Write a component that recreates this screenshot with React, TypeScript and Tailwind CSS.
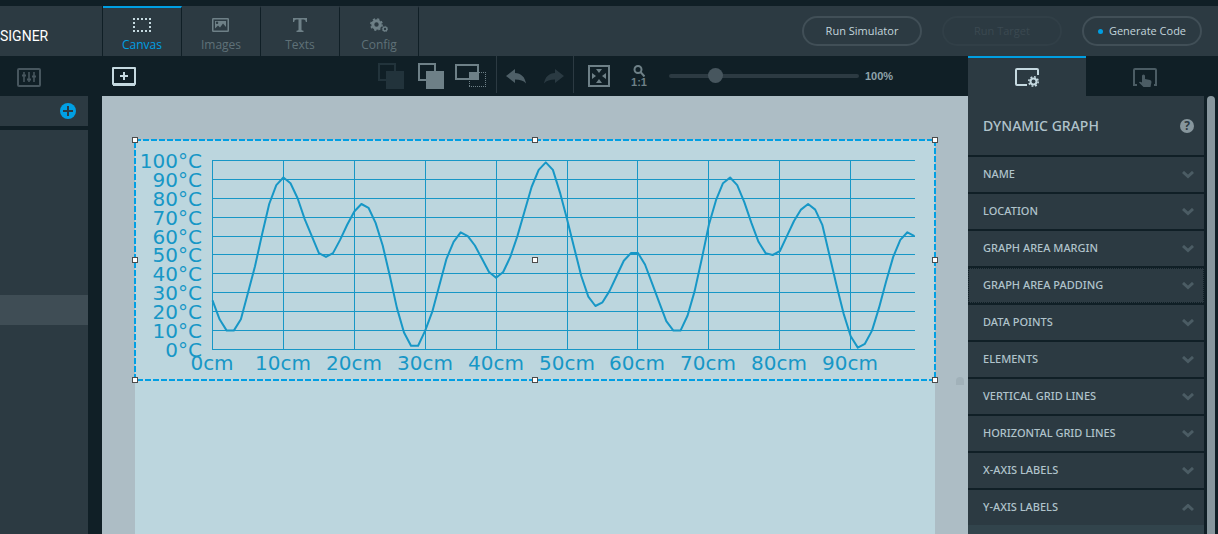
import { useState, type ReactNode } from "react";
import clsx from "clsx";

const NAV_ITEMS = ["Canvas", "Images", "Texts", "Config"] as const;
type NavItem = (typeof NAV_ITEMS)[number];

const SECTIONS = [
  "NAME",
  "LOCATION",
  "GRAPH AREA MARGIN",
  "GRAPH AREA PADDING",
  "DATA POINTS",
  "ELEMENTS",
  "VERTICAL GRID LINES",
  "HORIZONTAL GRID LINES",
  "X-AXIS LABELS",
  "Y-AXIS LABELS",
];

// One reading per centimetre, in °C.
const READINGS = [
  26, 16, 10, 10, 16, 30, 44, 61, 77, 87, 91, 88, 80, 69, 60, 51, 49, 51, 58, 66,
  73, 77, 75, 67, 55, 39, 22, 9, 2, 2, 10, 20, 34, 48, 57, 62, 60, 55, 48, 41,
  38, 41, 49, 60, 73, 86, 95, 99, 95, 83, 69, 54, 39, 28, 23, 25, 31, 39, 47, 51,
  51, 45, 35, 25, 15, 10, 10, 18, 31, 48, 66, 79, 88, 91, 87, 78, 67, 57, 51, 50,
  52, 60, 68, 74, 77, 74, 66, 50, 34, 19, 7, 1, 3, 10, 22, 36, 49, 58, 62, 60,
];

const PLOT = { left: 77, right: 779, top: 20, bottom: 209 };
const STEPS = [0, 10, 20, 30, 40, 50, 60, 70, 80, 90, 100];
const xOf = (i: number) => PLOT.left + (i * (PLOT.right - PLOT.left)) / 99;
const yOf = (v: number) => PLOT.bottom - (v * (PLOT.bottom - PLOT.top)) / 100;
// Halves go down, so the grid stays on whole pixels.
const snap = (n: number) => Math.ceil(n - 0.5);

function NavIcon({ name }: { name: NavItem }) {
  if (name === "Canvas") {
    return (
      <svg width="18" height="14" viewBox="0 0 18 14" fill="none" stroke="currentColor" strokeWidth="2">
        <path d="M0 1h18M0 13h18" strokeDasharray="2 2" />
        <path d="M1 4v8M17 4v8" strokeDasharray="2 2" />
      </svg>
    );
  }
  if (name === "Images") {
    return (
      <svg width="18" height="14" viewBox="0 0 18 14">
        <rect x="0.75" y="0.75" width="15.5" height="12.5" rx="0.5" fill="none" stroke="currentColor" strokeWidth="1.5" />
        <path fill="currentColor" fillRule="evenodd" d="M3 3h11v6l-3-3.500-3 4-2-2-3 3zM5 3.600a1.200 1.200 0 1 0 .1 0z" />
      </svg>
    );
  }
  if (name === "Texts") {
    return (
      <svg width="14" height="14" viewBox="0 0 14 14" fill="currentColor">
        <path d="M0 0h14v4h-1.2C12.5 2.2 12 1.5 10.500 1.500H8.500v10c0 .8.5 1 2 1.200V14h-7v-1.300c1.500-.2 2-.4 2-1.200v-10h-2C2 1.500 1.500 2.200 1.200 4H0z" />
      </svg>
    );
  }
  return (
    <svg width="18" height="14" viewBox="0 0 18 14" fill="none" stroke="currentColor">
      <circle cx="6.500" cy="6.500" r="3.700" strokeWidth="3" />
      <circle cx="6.500" cy="6.500" r="5.600" strokeWidth="1.600" strokeDasharray="2.200 2.200" />
      <circle cx="15" cy="11" r="1.900" strokeWidth="1.400" />
      <circle cx="15" cy="11" r="2.700" strokeWidth="0.800" strokeDasharray="1.060 1.060" />
    </svg>
  );
}

function IconButton({ label, className, children }: { label: string; className?: string; children: ReactNode }) {
  return (
    <button type="button" aria-label={label} className={clsx("flex shrink-0 items-center justify-center", className)}>
      {children}
    </button>
  );
}

function LayersIcon() {
  return (
    <svg width="26" height="26" viewBox="0 0 26 26">
      <rect x="1" y="1" width="16" height="16" fill="none" stroke="currentColor" strokeWidth="2" />
      <rect x="8" y="8" width="18" height="18" fill="currentColor" />
    </svg>
  );
}

function ReplyArrow({ flip }: { flip?: boolean }) {
  return (
    <svg width="20" height="15" viewBox="0 0 20 15" fill="currentColor" className={flip ? "-scale-x-100" : undefined}>
      <path d="M0 7 9 0v4c6 .2 10 4 11 10.500C17.500 11.500 14 10.500 9 10.500V14z" />
    </svg>
  );
}

function Toolbar() {
  return (
    <div className="flex h-10 items-center pl-[10px] pr-[76px]">
      <IconButton label="Add widget" className="text-[#c5d9e0]">
        <svg width="24" height="19" viewBox="0 0 24 19" fill="none" stroke="currentColor">
          <path d="M1 1h22v16H1z" strokeWidth="2" strokeLinejoin="round" />
          <path d="M1 17.500h22" strokeWidth="3" />
          <path d="M12 5v8M8 9h8" strokeWidth="2" />
        </svg>
      </IconButton>

      <div className="ml-auto flex h-full items-center text-[#6e8087]">
        <IconButton label="Bring to front" className="text-[#22333b]">
          <LayersIcon />
        </IconButton>
        <IconButton label="Send to back" className="ml-[14px]">
          <LayersIcon />
        </IconButton>
        <IconButton label="Crop to container" className="ml-[11px]">
          <svg width="31" height="24" viewBox="0 0 31 24" fill="none" stroke="currentColor">
            <rect x="1" y="1" width="22" height="14" strokeWidth="2" />
            <rect x="14" y="8" width="10" height="8" fill="currentColor" stroke="none" />
            <path d="M24 8.500h7M30.500 10v13M14 22.500h16M14.500 17v5" strokeDasharray="1 1" />
          </svg>
        </IconButton>
        <span className="ml-[10px] h-[37px] w-px self-start bg-[#2c3a42]" />
        <IconButton label="Undo" className="ml-[9px] text-[#4f6068]">
          <ReplyArrow />
        </IconButton>
        <IconButton label="Redo" className="ml-[18px] text-[#2a3a42]">
          <ReplyArrow flip />
        </IconButton>
        <span className="ml-[9px] h-[37px] w-px self-start bg-[#2c3a42]" />
        <IconButton label="Fit to window" className="ml-[14px]">
          <svg width="22" height="22" viewBox="0 0 22 22">
            <rect x="1" y="1" width="20" height="20" fill="none" stroke="currentColor" strokeWidth="2" />
            <path d="M8 4h6l-3 4zM8 18h6l-3-4zM4 8v6l4-3zM18 8v6l-4-3z" fill="currentColor" />
          </svg>
        </IconButton>
        <IconButton label="Zoom to actual size" className="ml-[22px] w-[14px] flex-col">
          <svg width="12" height="12" viewBox="0 0 12 12" fill="none" stroke="currentColor" strokeWidth="2">
            <circle cx="5" cy="4.500" r="3.500" />
            <path d="m7.500 7 4 4.500" />
          </svg>
          <span className="font-['Liberation_Sans'] text-[11px] font-bold leading-[11px]">1:1</span>
        </IconButton>
        <input
          type="range"
          aria-label="Zoom"
          min={0}
          max={100}
          defaultValue={22}
          className="ml-[23px] h-[15px] w-[190px] appearance-none bg-transparent [&::-webkit-slider-runnable-track]:h-1 [&::-webkit-slider-runnable-track]:rounded-full [&::-webkit-slider-runnable-track]:bg-[#2c3a42] [&::-webkit-slider-thumb]:-mt-[6px] [&::-webkit-slider-thumb]:size-[15px] [&::-webkit-slider-thumb]:appearance-none [&::-webkit-slider-thumb]:rounded-full [&::-webkit-slider-thumb]:bg-[#47565e]"
        />
        <span className="ml-[6px] w-[27px] whitespace-nowrap font-['Liberation_Sans'] text-[11px] font-bold text-[#8fa3ab]">
          100%
        </span>
      </div>
    </div>
  );
}

function DynamicGraph() {
  const points = READINGS.map((v, i) => `${xOf(i).toFixed(1)},${yOf(v).toFixed(1)}`).join(" ");
  return (
    <svg viewBox="0 0 800 240" className="block w-full overflow-visible" role="img" aria-label="Dynamic graph">
      <g stroke="#1797c6" fill="none">
        {STEPS.map((v) => (
          <path key={v} d={`M${PLOT.left} ${snap(yOf(v)) + 0.5}H${PLOT.right + 1}`} />
        ))}
        {STEPS.slice(0, 10).map((v) => (
          <path key={v} d={`M${snap(xOf(v)) + 0.5} ${PLOT.top}V${PLOT.bottom + 1}`} />
        ))}
        <polyline points={points} strokeWidth="2" strokeLinejoin="round" transform="translate(0.5 0.5)" />
      </g>
      <g fill="#1797c6" fontSize="20" className="font-['DejaVu_Sans']">
        {STEPS.map((v) => (
          <text key={v} x="67" y={snap(yOf(v)) + 8} textAnchor="end">
            {v}°C
          </text>
        ))}
        {STEPS.slice(0, 10).map((v) => (
          <text key={v} x={snap(xOf(v))} y="230" textAnchor="middle">
            {v}cm
          </text>
        ))}
      </g>
      {/* selection frame and its handles */}
      <rect width="800" height="240" fill="none" stroke="#009fe3" strokeWidth="2" strokeDasharray="6 2" />
      {[
        [0, 0], [400, 0], [800, 0],
        [0, 120], [400, 120], [800, 120],
        [0, 240], [400, 240], [800, 240],
      ].map(([x, y]) => (
        <rect key={`${x}-${y}`} x={x - 2.5} y={y - 2.5} width="5" height="5" fill="#fff" stroke="#4c4c4c" />
      ))}
    </svg>
  );
}

function Chevron({ up }: { up?: boolean }) {
  return (
    <svg width="12" height="8" viewBox="0 0 12 8" fill="none" stroke="#4b5c64" strokeWidth="3">
      <path d={up ? "m1 6 5-4.500 5 4.500" : "m1 1 5 4.500 5-4.500"} />
    </svg>
  );
}

function PropertiesPanel() {
  const [open, setOpen] = useState("Y-AXIS LABELS");
  const focused = "GRAPH AREA PADDING";
  return (
    <aside className="flex w-[250px] shrink-0 flex-col font-['Noto_Sans','Open_Sans',sans-serif]">
      <div className="flex h-10 shrink-0 pr-[14px]">
        <button
          type="button"
          aria-label="Properties"
          className="flex flex-1 items-center justify-center border-t-2 border-[#009fe3] bg-[#2c3a42] text-[#c5d9e0]"
        >
          <svg width="24" height="19" viewBox="0 0 24 19" fill="none" stroke="currentColor">
            <path d="M12 17H2a1 1 0 0 1-1-1V2a1 1 0 0 1 1-1h20q1 0 1 1v5" strokeWidth="2" />
            <circle cx="18.500" cy="13.500" r="3" strokeWidth="2" />
            <circle cx="18.500" cy="13.500" r="4.700" strokeWidth="1.600" strokeDasharray="1.850 1.841" />
          </svg>
        </button>
        <button type="button" aria-label="Interactions" className="flex flex-1 items-center justify-center pt-[2px] text-[#4b5c64]">
          <svg width="24" height="19" viewBox="0 0 24 19">
            <path d="M4 17H1V2q0-1 1-1h20q1 0 1 1v15h-2" fill="none" stroke="currentColor" strokeWidth="2" />
            <path
              d="M9 8a1.500 1.500 0 0 1 3 0v3l5 1q1.500.4 1.500 2L17.500 19h-7L6 14.500q.5-1.600 3 0z"
              fill="currentColor"
            />
          </svg>
        </button>
      </div>
      <div className="flex min-h-0 flex-1">
        <div className="flex min-w-0 flex-1 flex-col gap-[2px]">
          <div className="flex h-[59px] shrink-0 items-center justify-between bg-[#2c3a42] pl-[15px] pr-[10px]">
            <h2 className="text-[14px] font-medium text-[#b0c3cb]">DYNAMIC GRAPH</h2>
            <button
              type="button"
              aria-label="Help"
              className="flex size-[14px] items-center justify-center rounded-full bg-[#87969d] text-[12px] font-bold text-[#2c3a42]"
            >
              ?
            </button>
          </div>
          {SECTIONS.map((name) => (
            <button
              key={name}
              type="button"
              aria-expanded={open === name}
              onClick={() => setOpen(open === name ? "" : name)}
              className={clsx(
                "flex h-[35px] shrink-0 items-center justify-between bg-[#2c3a42] pl-[15px] pr-[10px] text-[11px] font-medium text-[#b0c3cb]",
                name === focused && "outline-1 -outline-offset-1 outline-dotted outline-[#101f26]",
              )}
            >
              {name}
              <Chevron up={open === name} />
            </button>
          ))}
          {open && <div className="-mt-[2px] h-[200px] shrink-0 bg-[#32444c]" />}
        </div>
        <div className="w-[14px] shrink-0 px-[3px]">
          <div className="h-full w-2 rounded-t-full bg-[#87969d]" />
        </div>
      </div>
    </aside>
  );
}

function ScreensPanel() {
  return (
    <aside className="flex w-[102px] shrink-0 flex-col pr-[14px]">
      <div className="flex h-10 shrink-0 items-center pl-[17px] pt-[3px] text-[#47565e]">
        <svg width="24" height="19" viewBox="0 0 24 19" fill="none" stroke="currentColor" strokeWidth="2">
          <rect x="1" y="1" width="22" height="17" rx="1" />
          <path d="M7 4v10M12 4v10M17 4v10" strokeWidth="1.600" />
          <path d="M5 7.500h4M10 11.500h4M15 8.500h4" />
        </svg>
      </div>
      <div className="flex h-[30px] shrink-0 items-center justify-end bg-[#2c3a42] pr-3">
        <IconButton label="Add screen" className="size-4 rounded-full bg-[#009fe3] text-[#2c3a42]">
          <svg width="10" height="10" viewBox="0 0 10 10" stroke="currentColor" strokeWidth="2">
            <path d="M5 0v10M0 5h10" />
          </svg>
        </IconButton>
      </div>
      <div className="mt-1 min-h-0 flex-1 bg-[#2c3a42] pt-[165px]">
        <div className="h-[30px] bg-[#3f4d55]" />
      </div>
    </aside>
  );
}

export default function App() {
  const [active, setActive] = useState<NavItem>("Canvas");
  return (
    <div className="flex h-screen flex-col overflow-hidden bg-[#101f26] pt-[6px] font-['Open_Sans',sans-serif]">
      <header className="flex h-[50px] shrink-0 items-stretch bg-[#2c3a42]">
        <div className="flex w-[102px] shrink-0 items-center pt-[10px] font-['Roboto'] text-[14px] text-white">SIGNER</div>
        <nav className="flex border-l border-[#101f26]">
          {NAV_ITEMS.map((item) => (
            <button
              key={item}
              type="button"
              onClick={() => setActive(item)}
              className={clsx(
                "flex w-[79px] flex-col items-center border-r border-t-2 border-r-[#101f26] pt-[10px]",
                item === active ? "border-t-[#009fe3]" : "border-t-transparent",
              )}
            >
              <span className={item === active ? "text-[#c5d9e0]" : "text-[#6e8087]"}>
                <NavIcon name={item} />
              </span>
              <span
                className={clsx("mt-1 text-[12px] leading-[18px]", item === active ? "text-[#009fe3]" : "text-[#5f7178]")}
              >
                {item}
              </span>
            </button>
          ))}
        </nav>
        <div className="ml-auto flex items-center gap-5 pr-4 text-[11px] text-[#c3d5dc]">
          <button type="button" className="h-[30px] w-[120px] rounded-full border-2 border-[#414f57]">
            Run Simulator
          </button>
          <button type="button" disabled className="h-[30px] w-[120px] rounded-full border-2 border-[#313f47] text-[#3b4951]">
            Run Target
          </button>
          <button
            type="button"
            className="flex h-[30px] w-[120px] items-center justify-center gap-[6px] rounded-full border-2 border-[#414f57]"
          >
            <span className="size-[5px] rounded-full bg-[#009fe3]" />
            Generate Code
          </button>
        </div>
      </header>

      <div className="flex min-h-0 flex-1">
        <ScreensPanel />
        <main className="flex min-w-0 flex-1 flex-col">
          <Toolbar />
          <div className="relative min-h-0 flex-1 overflow-hidden bg-[#adbdc5] px-[33px] pt-11">
            <div className="h-full bg-[#bcd6de]">
              <DynamicGraph />
            </div>
            <span className="absolute right-1 top-[281px] h-2 w-2 rounded-t-full bg-[#a1b1b9]" />
          </div>
        </main>
        <PropertiesPanel />
      </div>
    </div>
  );
}
